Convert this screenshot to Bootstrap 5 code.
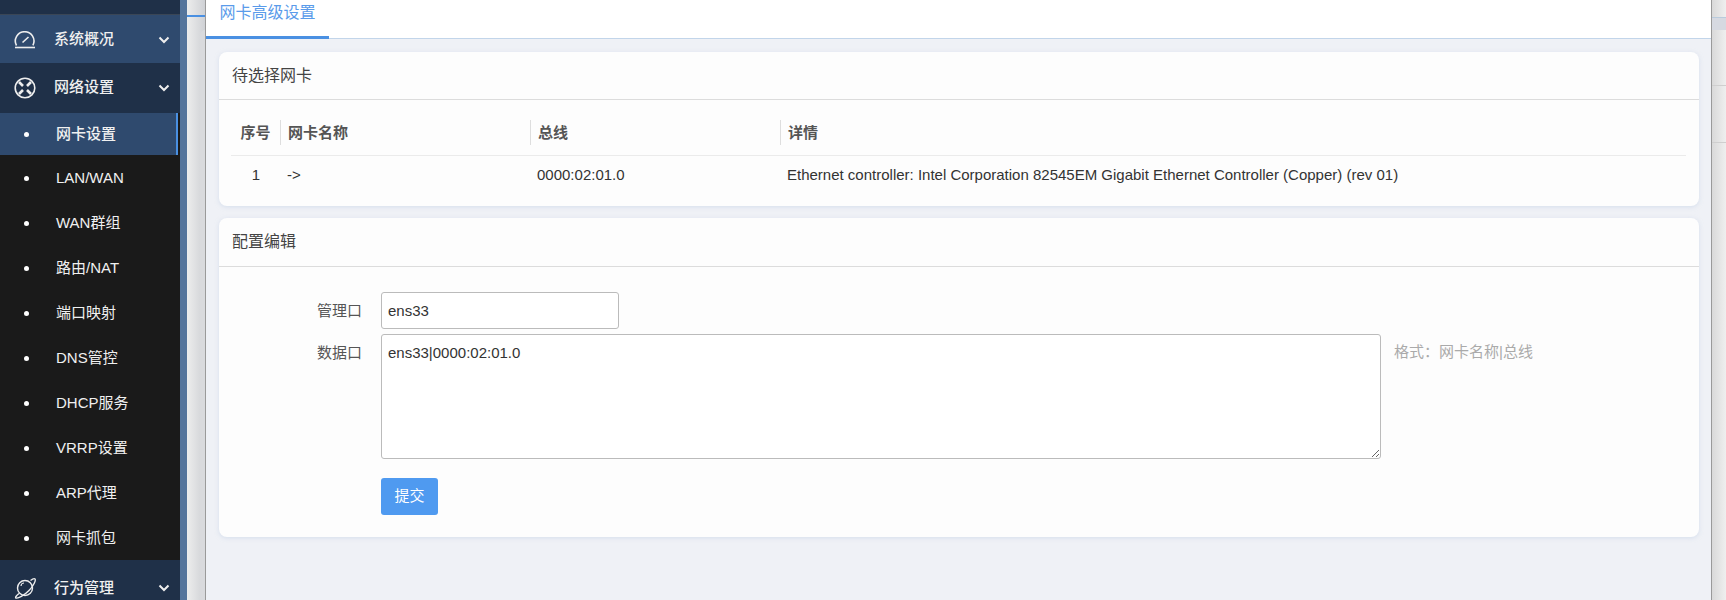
<!DOCTYPE html>
<html lang="zh">
<head>
<meta charset="utf-8">
<title>网卡高级设置</title>
<link href="https://cdn.jsdelivr.net/npm/bootstrap@5.3.0/dist/css/bootstrap.min.css" rel="stylesheet">
<style>
html,body{height:600px;overflow:hidden;margin:0}
body{font-family:"Liberation Sans","Noto Sans CJK SC",sans-serif;font-size:15px;color:#333;background:#e6e6e6}
.shell{width:1726px;height:600px}
.side-wrap{width:187px;height:600px;background:#55759c;flex:none}
.side{width:180px;height:600px;background:#1a1a1a;overflow:hidden}
.side-top{height:15px;background:#1f3048;border-bottom:1px solid #3a4656}
.side-grp{display:flex;align-items:center;color:#f0f0f0;background:#1f3048;font-weight:500}
.side-grp.is-hot{height:48px;background:#2f4a6e;padding-top:1px}
.side-grp.is-open{height:50px;padding-bottom:1px}
.side-grp.is-last{height:45px;padding-top:11px}
.side-ic{width:54px;padding-left:14px;flex:none;display:flex}
.side-lbl{flex:1}
.side-car{width:16px;margin-right:6px;display:flex}
.side-sub{display:flex;align-items:center;height:45px;color:#f0f0f0;padding:2px 0 0 24px}
.side-sub.is-first{height:42px;padding-top:0;margin-right:2px;background:#2f4a6e;border-right:2px solid #4a90e2;font-weight:500}
.side-sub i{width:5px;height:5px;border-radius:50%;background:#fff;margin-right:27px;flex:none}
.gutter{width:18px;height:600px;flex:none;background:linear-gradient(90deg,#ededed,#cfd1d5)}
.gutter-line{height:2px;margin-top:15px;background:#4a90e2}
.gutter-inner{height:583px;margin:13px 0 0 13px;border-top-left-radius:8px;background:#d9dadd}
.pane{width:1507px;height:600px;flex:none;background:#eff1f6;border-left:1px solid #9a9a9a;border-right:1px solid #9a9a9a}
.tabbar{height:39px;background:#fff;border-bottom:1px solid #c2d5ea;display:flex}
.tabitem{width:123px;height:39px;border-bottom:3px solid #4a90e2;color:#5a9bea;font-size:16px;line-height:26px;text-align:center}
.panes{padding:13px 12px 0 13px}
.box{background:#fdfdfd;border-radius:8px;box-shadow:0 1px 4px rgba(190,205,230,.5);margin-bottom:12px}
.box-h{height:48px;line-height:47px;padding-left:13px;border-bottom:1px solid #dcdcdc;font-size:16px;color:#444}
.box-b1{padding:13px 13px 12px 12px}
.nic{width:100%;table-layout:fixed;color:#333;margin:0}
.nic th{height:42px;border-bottom:1px solid #ebebeb;padding:0 0 2px;font-weight:700;color:#555}
.nic th span{display:block;height:25px;line-height:25px;border-left:1px solid #dedede;padding-left:7px}
.nic th:first-child{text-align:center}
.nic td{height:39px;padding:0 0 0 7px}
.nic td:first-child{text-align:center;padding:0 0 0 1px}
.cfg{padding:25px 0 22px}
.cfg-row{display:flex;margin-bottom:5px}
.cfg-l{width:162px;height:37px;padding-right:19px;text-align:right;color:#555;line-height:38px;flex:none}
.cfg-in{width:238px;height:37px;border:1px solid #bbb;border-radius:3px;padding:0 6px;font-size:15px;font-family:inherit;color:#333;background:#fff}
.cfg-ta{width:1000px;height:125px;border:1px solid #bbb;border-radius:3px;padding:8px 6px;font-size:15px;line-height:20px;font-family:inherit;color:#333;background:#fff;display:block}
.cfg-tip{color:#aaa;line-height:35px;margin-left:13px}
.cfg-btn{margin:19px 0 0 162px;width:57px;height:37px;background:#4f9af0;border:0;border-radius:3px;color:#fff;font-size:15px;padding:0;display:block}
.box-h.is-tall{height:49px}
.edge{background:linear-gradient(90deg,#d9d9d9,#efefef)}
.edge-line{height:1px;margin-top:17px;background:#b9cbdc}
.edge-band{height:12px;background:#d6d9e1}
.edge-rule{height:1px;margin-top:55px;background:#cfcfcf}
.edge-rule.is-b{margin-top:56px}
</style>
</head>
<body>
<div class="shell d-flex">
  <div class="side-wrap">
    <nav class="side">
      <div class="side-top"></div>
      <div class="side-grp is-hot">
        <span class="side-ic"><svg width="22" height="18" viewBox="0 0 22 18" fill="none" stroke="#eee" stroke-width="1.6"><path d="M2.500 14.500a9.300 9.300 0 1 1 16.400-.2"/><path d="M1 16.500h20"/><path d="M8.500 11.500 14.500 6"/></svg></span>
        <span class="side-lbl">系统概况</span>
        <span class="side-car"><svg width="12" height="8" viewBox="0 0 12 8" fill="none" stroke="#eee" stroke-width="2"><path d="M1.500 1.500 6 6l4.500-4.500"/></svg></span>
      </div>
      <div class="side-grp is-open">
        <span class="side-ic"><svg width="22" height="22" viewBox="0 0 22 22" fill="none" stroke="#eee" stroke-width="1.6"><circle cx="11" cy="11" r="9.800"/><path d="M5 5 9 9M17 5 13 9M5 17 9 13M17 17 13 13" stroke-width="2.600"/></svg></span>
        <span class="side-lbl">网络设置</span>
        <span class="side-car"><svg width="12" height="8" viewBox="0 0 12 8" fill="none" stroke="#eee" stroke-width="2"><path d="M1.500 1.500 6 6l4.500-4.500"/></svg></span>
      </div>
      <div class="side-sub is-first"><i></i>网卡设置</div>
      <div class="side-sub"><i></i>LAN/WAN</div>
      <div class="side-sub"><i></i>WAN群组</div>
      <div class="side-sub"><i></i>路由/NAT</div>
      <div class="side-sub"><i></i>端口映射</div>
      <div class="side-sub"><i></i>DNS管控</div>
      <div class="side-sub"><i></i>DHCP服务</div>
      <div class="side-sub"><i></i>VRRP设置</div>
      <div class="side-sub"><i></i>ARP代理</div>
      <div class="side-sub"><i></i>网卡抓包</div>
      <div class="side-grp is-last">
        <span class="side-ic"><svg width="22" height="22" viewBox="0 0 22 22" fill="none" stroke="#eee" stroke-width="1.400"><circle cx="11" cy="11" r="7.500"/><path d="M5 16.500C2 19 1 20.500 2 21c2 .8 8-2.500 13-7.500S22 3 21 2c-.6-.6-2.500 0-4.500 1.500"/><path d="M7 9a3 3 0 0 1 3-3" stroke-width="1.200"/></svg></span>
        <span class="side-lbl">行为管理</span>
        <span class="side-car"><svg width="12" height="8" viewBox="0 0 12 8" fill="none" stroke="#eee" stroke-width="2"><path d="M1.500 1.500 6 6l4.500-4.500"/></svg></span>
      </div>
    </nav>
  </div>
  <div class="gutter"><div class="gutter-line"></div><div class="gutter-inner"></div></div>
  <main class="pane">
    <div class="tabbar"><div class="tabitem">网卡高级设置</div></div>
    <div class="panes">
      <section class="box">
        <div class="box-h">待选择网卡</div>
        <div class="box-b1">
          <table class="nic">
            <colgroup><col style="width:49px"><col style="width:250px"><col style="width:250px"><col></colgroup>
            <thead><tr><th>序号</th><th><span>网卡名称</span></th><th><span>总线</span></th><th><span>详情</span></th></tr></thead>
            <tbody><tr><td>1</td><td>-&gt;</td><td>0000:02:01.0</td><td>Ethernet controller: Intel Corporation 82545EM Gigabit Ethernet Controller (Copper) (rev 01)</td></tr></tbody>
          </table>
        </div>
      </section>
      <section class="box">
        <div class="box-h is-tall">配置编辑</div>
        <form class="cfg">
          <div class="cfg-row"><label class="cfg-l">管理口</label><input class="cfg-in" value="ens33"></div>
          <div class="cfg-row"><label class="cfg-l">数据口</label><textarea class="cfg-ta">ens33|0000:02:01.0</textarea><span class="cfg-tip">格式：网卡名称|总线</span></div>
          <button type="button" class="cfg-btn">提交</button>
        </form>
      </section>
    </div>
  </main>
  <div class="edge flex-grow-1">
    <div class="edge-line"></div><div class="edge-band"></div><div class="edge-rule"></div><div class="edge-rule is-b"></div>
  </div>
</div>
<script src="https://cdn.jsdelivr.net/npm/bootstrap@5.3.0/dist/js/bootstrap.bundle.min.js"></script>
</body>
</html>
